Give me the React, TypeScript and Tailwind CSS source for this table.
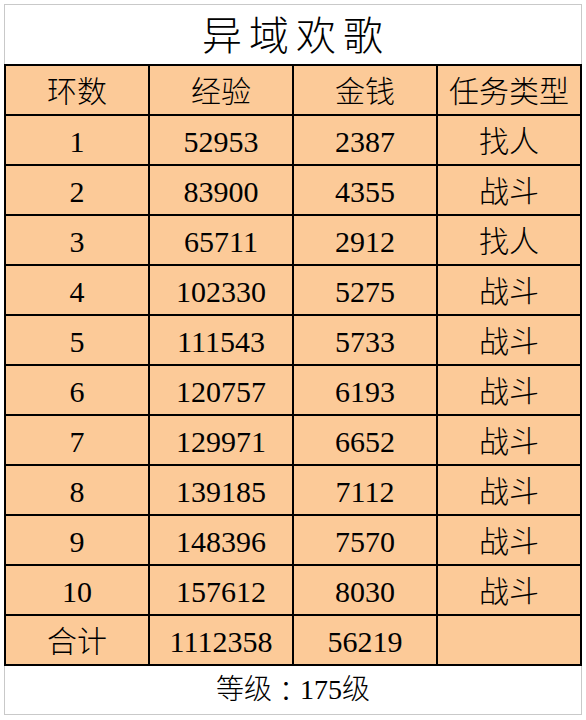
import React from 'react';

const rows = [
  { ring: '1', exp: '52953', gold: '2387', type: '找人' },
  { ring: '2', exp: '83900', gold: '4355', type: '战斗' },
  { ring: '3', exp: '65711', gold: '2912', type: '找人' },
  { ring: '4', exp: '102330', gold: '5275', type: '战斗' },
  { ring: '5', exp: '111543', gold: '5733', type: '战斗' },
  { ring: '6', exp: '120757', gold: '6193', type: '战斗' },
  { ring: '7', exp: '129971', gold: '6652', type: '战斗' },
  { ring: '8', exp: '139185', gold: '7112', type: '战斗' },
  { ring: '9', exp: '148396', gold: '7570', type: '战斗' },
  { ring: '10', exp: '157612', gold: '8030', type: '战斗' },
  { ring: '合计', exp: '1112358', gold: '56219', type: '' },
];

const font = { fontFamily: '"Liberation Serif", "Noto Sans CJK SC", serif' };

const Cell = ({ children }: { children?: React.ReactNode }) => (
  <div className="flex h-[48px] items-center justify-center bg-[#fcca98] pt-[4px] text-[30px] font-light leading-none text-black">
    {children}
  </div>
);

const App = () => {
  return (
    <div className="min-h-screen bg-white pl-[4px] pt-[4px]" style={font}>
      <div className="w-[578px] border border-[#c9c9c9] bg-white">
        {/* Title */}
        <div className="flex h-[59px] items-center justify-center pl-[6px] pt-[4px] text-[40px] font-light tracking-[7px] text-black">
          异域欢歌
        </div>

        {/* Table */}
        <div className="-mx-px grid grid-cols-4 gap-[2px] border-2 border-black bg-black">
          <Cell>环数</Cell>
          <Cell>经验</Cell>
          <Cell>金钱</Cell>
          <Cell>任务类型</Cell>
          {rows.map((r) => (
            <React.Fragment key={r.ring}>
              <Cell>{r.ring}</Cell>
              <Cell>{r.exp}</Cell>
              <Cell>{r.gold}</Cell>
              <Cell>{r.type}</Cell>
            </React.Fragment>
          ))}
        </div>

        {/* Footer */}
        <div className="flex h-[48px] items-center justify-center text-[28px] font-light text-black">
          等级
          <span className="font-['Noto_Sans_CJK_JP',sans-serif]">：</span>
          175级
        </div>
      </div>
    </div>
  );
};

export default App;
